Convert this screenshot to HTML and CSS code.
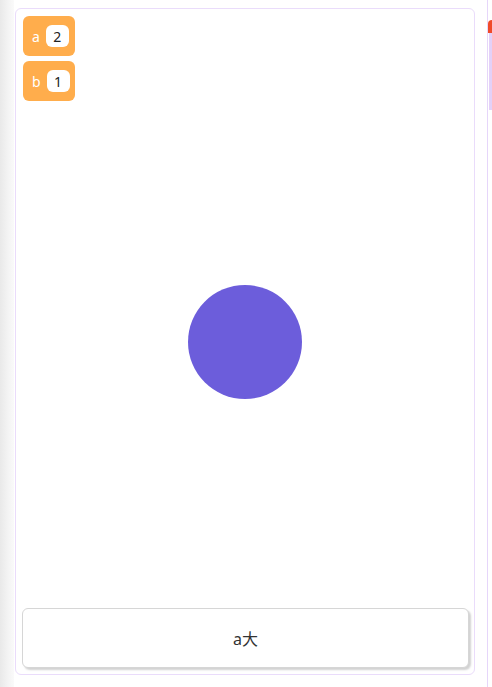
FILE: index.html
```html
<!DOCTYPE html>
<html lang="zh">
<head>
  <meta charset="UTF-8">
  <title>a大</title>
  <meta name="viewport" content="width=device-width, initial-scale=1.0">
  <link rel="stylesheet" href="styles.css">
</head>
<body>

<div class="pagina">
  <div class="franja"></div>

  <div class="panel">
    <div class="contadores">
      <div class="contador"><span class="letra">a</span><span class="numero">2</span></div>
      <div class="contador"><span class="letra">b</span><span class="numero">1</span></div>
    </div>

    <div class="circulo"></div>

    <button class="boton">a大</button>
  </div>

  <div class="lateral">
    <div class="lateral-marca"></div>
    <div class="lateral-barra"></div>
  </div>
</div>

</body>
</html>
```

FILE: styles.css
```css
html, body { margin: 0; padding: 0; background: #fff; }
body { font-family: "Noto Sans", "Noto Sans CJK SC", sans-serif; width: 492px; height: 687px; overflow: hidden; }

.pagina { display: flex; height: 687px; }

.franja { width: 14px; flex: none; background: linear-gradient(to right, #e9e9e9, #f4f4f4 60%, #fafafa); }

.panel {
  position: relative;
  flex: none;
  width: 447px;
  height: 665px;
  margin: 8px 0 0 1px;
  padding: 0 5px 0 6px;
  border: 1px solid #eadcfb;
  border-radius: 6px;
  display: flex;
  flex-direction: column;
  justify-content: space-between;
}

.contadores { display: flex; flex-direction: column; gap: 5px; padding: 7px 0 0 1px; }
.contador {
  display: flex; align-items: center; gap: 6px;
  width: 52px; height: 40px; box-sizing: border-box;
  padding-left: 9px;
  background: #ffad4c;
  border-radius: 6px;
}
.letra { color: #fff; font-size: 14px; }
.numero {
  display: flex; align-items: center; justify-content: center;
  width: 23px; height: 22px;
  background: #fff; border-radius: 6px;
  color: #222; font-size: 14px;
}

.circulo {
  position: absolute;
  left: 50%; top: 50%;
  width: 114px; height: 114px;
  margin: -57px 0 0 -57px;
  border-radius: 50%;
  background: #6c5ddb;
}

.boton {
  width: 447px; height: 60px;
  margin-bottom: 6px;
  background: #fff;
  border: 1px solid #d6d6d6;
  border-radius: 6px;
  box-shadow: 2px 2px 2px rgba(0, 0, 0, 0.18);
  font-family: "Noto Sans", "Noto Sans CJK SC", sans-serif;
  font-size: 16px;
  color: #333;
  cursor: pointer;
}

.lateral { position: relative; flex: 1; }
.lateral::before { content: ""; position: absolute; left: 12px; top: 0; bottom: 0; width: 1px; background: #e6d6fa; }
.lateral-marca { margin: 20px 0 0 13px; height: 13px; background: #f04a2a; border-top-left-radius: 5px; }
.lateral-barra { margin-left: 14px; height: 77px; background: #e3d1f8; }
```
